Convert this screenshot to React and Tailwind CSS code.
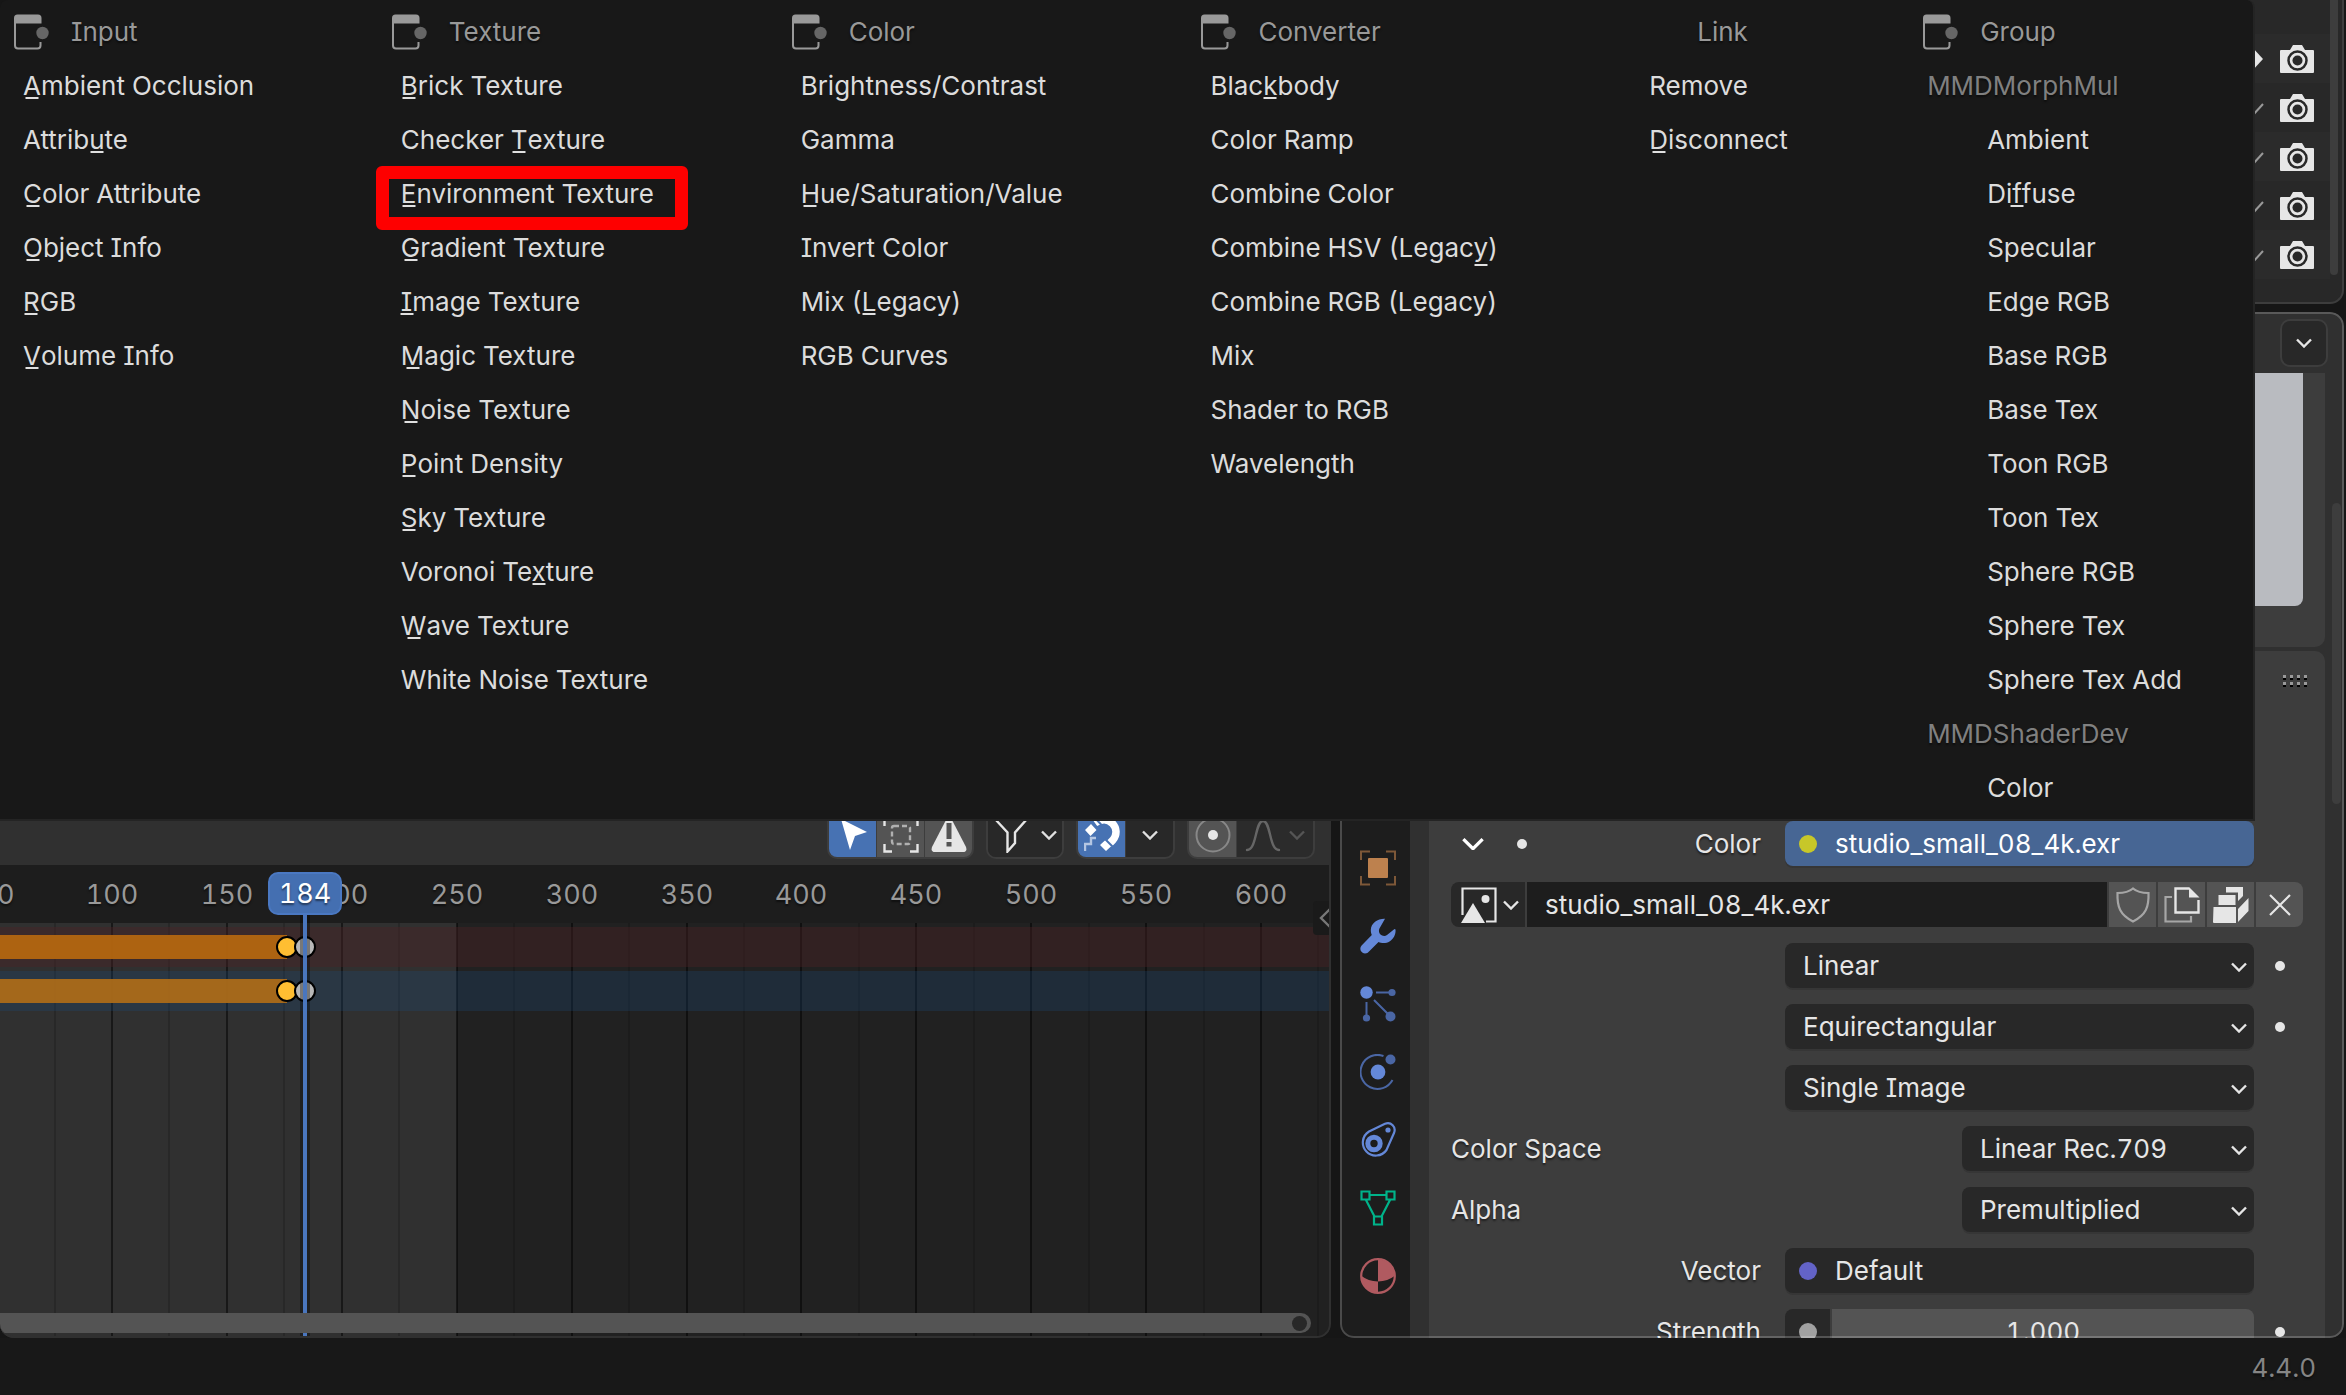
import React, { useState } from 'react';
import clsx from 'clsx';

// "_" marks the accelerator letter that follows it
const MENU = [
    {
        title: 'Input',
        icon: true,
        items: ['_Ambient Occlusion', 'Attrib_ute', '_Color Attribute', '_Object Info', '_RGB', '_Volume Info'],
    },
    {
        title: 'Texture',
        icon: true,
        items: [
            '_Brick Texture',
            'Checker _Texture',
            '_Environment Texture',
            '_Gradient Texture',
            '_Image Texture',
            '_Magic Texture',
            '_Noise Texture',
            '_Point Density',
            '_Sky Texture',
            'Voronoi Te_xture',
            '_Wave Texture',
            'White Noise Texture',
        ],
    },
    {
        title: 'Color',
        icon: true,
        items: ['Brightness/Contrast', 'Gamma', '_Hue/Saturation/Value', 'Invert Color', 'Mix (_Legacy)', 'RGB Curves'],
    },
    {
        title: 'Converter',
        icon: true,
        items: [
            'Blac_kbody',
            'Color Ramp',
            'Combine Color',
            'Combine HSV (Legac_y)',
            'Combine RGB (Legacy)',
            'Mix',
            'Shader to RGB',
            'Wavelength',
        ],
    },
    { title: 'Link', items: ['Remove', '_Disconnect'] },
];

const GROUPS = [
    {
        title: 'MMDMorphMul',
        items: [
            'Ambient',
            'Di_ffuse',
            'Specular',
            'Edge RGB',
            'Base RGB',
            'Base Tex',
            'Toon RGB',
            'Toon Tex',
            'Sphere RGB',
            'Sphere Tex',
            'Sphere Tex Add',
        ],
    },
    { title: 'MMDShaderDev', items: ['Color'] },
];

const HIGHLIGHTED = '_Environment Texture';

const NodeIcon = () => (
    <svg viewBox="0 0 36 36" className="w-9 h-9 shrink-0" fill="none">
        <path d="M1 9.5V4a3.500 3.500 0 0 1 3.500-3.500h20.500a3.500 3.500 0 0 1 3.500 3.500v5.500z" fill="#999" />
        <path d="M2 9v22.500a3 3 0 0 0 3 3h19.500a3 3 0 0 0 3-3V28" stroke="#999" strokeWidth="2" />
        <circle cx="29.500" cy="19" r="6.200" fill="#666" />
    </svg>
);

const Chevron = ({ className }) => (
    <svg viewBox="0 0 16 10" className={clsx('pointer-events-none shrink-0', className)} fill="none" stroke="currentColor" strokeWidth="2.400">
        <path d="M1 1.500l7 7 7-7" />
    </svg>
);

const Label = ({ text }) => {
    const at = text.indexOf('_');
    if (at < 0) return text;
    const letter = text[at + 1];
    return (
        <>
            {text.slice(0, at)}
            <span className="relative">
                {letter}
                <span
                    className={clsx(
                        'absolute left-1/2 -translate-x-1/2 w-[13px] h-[2px] bg-[#e0e0e0]',
                        'gjpqy'.includes(letter) ? '-bottom-[3px]' : 'bottom-[2px]'
                    )}
                />
            </span>
            {text.slice(at + 2)}
        </>
    );
};

const MenuItem = ({ text, indent }) => (
    <li className="relative h-[54px] flex">
        <button type="button" className={clsx('h-full w-full text-left whitespace-nowrap', indent ? 'pl-[78px]' : 'pl-[23px]')}>
            <Label text={text} />
        </button>
        {text === HIGHLIGHTED && (
            <span className="absolute -left-[2px] -top-px w-[312px] h-16 border-[13px] border-[#fe0000] rounded-md pointer-events-none" />
        )}
    </li>
);

const MenuHeader = ({ title, icon }) => (
    <h2 className="h-[54px] pl-[13px] flex items-center text-[#999]">
        {icon ? <NodeIcon /> : <span className="w-9" />}
        <span className="pl-[22px]">{title}</span>
    </h2>
);

const AddMenu = () => (
    <nav className="absolute left-0 top-0 w-[96.120%] z-20 bg-[#181818] border-r-2 border-b-2 border-[#242424] rounded-t-lg pt-[5px] pb-1 text-[#dcdcdc] grid grid-cols-[378fr_400fr_410fr_439fr_283fr_344fr]">
        {MENU.map(col => (
            <section key={col.title} className="min-w-0">
                <MenuHeader title={col.title} icon={col.icon} />
                <ul>
                    {col.items.map(text => <MenuItem key={text} text={text} />)}
                </ul>
            </section>
        ))}
        <section className="min-w-0">
            <MenuHeader title="Group" icon />
            {GROUPS.map(group => (
                <div key={group.title}>
                    <h3 className="h-[54px] pl-[18px] flex items-center text-[#808080]">{group.title}</h3>
                    <ul>
                        {group.items.map(text => <MenuItem key={text} text={text} indent />)}
                    </ul>
                </div>
            ))}
        </section>
    </nav>
);

/* ---------- timeline ---------- */

const FRAME_PX = 2.298;
const frameX = frame => Math.round(112 + (frame - 100) * FRAME_PX);
const MAJOR = [50, 100, 150, 200, 250, 300, 350, 400, 450, 500, 550, 600];
const MINOR = MAJOR.map(f => f + 25);
const KEYS = [
    { frame: 176, fill: 'bg-[#ffbe32]' },
    { frame: 184, fill: 'bg-[#b8b8b8]' },
];

const ToolButton = ({ label, active, className, children }) => (
    <button
        type="button"
        aria-label={label}
        className={clsx('h-full w-[47px] flex items-center justify-center', active ? 'bg-[#4772b3]' : 'bg-[#545454]', className)}
    >
        {children}
    </button>
);

const ToolGroup = ({ className, children }) => (
    <div className={clsx('h-12 flex gap-px border-2 border-[#3d3d3d] bg-[#3d3d3d] rounded-[10px] overflow-hidden', className)}>{children}</div>
);

const TimelineHeader = () => (
    <div className="h-[61px] bg-[#303030] pr-4 pt-[7px] flex justify-end items-start gap-3">
        <ToolGroup>
            <ToolButton label="Only show selected" active>
                <svg viewBox="0 0 36 36" className="w-9 h-9" fill="#fff"><path d="M6 2l26 13-12 4-5 14z" /></svg>
            </ToolButton>
            <ToolButton label="Show hidden">
                <svg viewBox="0 0 36 36" className="w-9 h-9" fill="none" strokeWidth="2.400">
                    <path d="M1.500 9V1.500H9M27 1.500h7.500V9M34.500 27v7.500H27M9 34.500H1.500V27" stroke="#e6e6e6" />
                    <rect x="9" y="9" width="18" height="18" rx="2" stroke="#b0b0b0" strokeDasharray="5 3" />
                </svg>
            </ToolButton>
            <ToolButton label="Only show errors">
                <svg viewBox="0 0 36 36" className="w-9 h-9">
                    <path d="M15 3q3-5 6 0l14 27q1.500 5-3 5H4q-4.500 0-3-5z" fill="#e6e6e6" />
                    <path d="M15.500 6h5v16h-5zM15.500 25h5v4.500h-5z" fill="#545454" />
                </svg>
            </ToolButton>
        </ToolGroup>
        <ToolGroup>
            <button type="button" aria-label="Filters" className="h-full w-[74px] bg-[#282828] flex items-center justify-center gap-3 text-[#e0e0e0]">
                <svg viewBox="0 0 36 36" className="w-9 h-9" fill="none" stroke="#e6e6e6" strokeWidth="2.400">
                    <path d="M2 2h32L22 15.500V26l-7.500 8.500v-19z" />
                </svg>
                <Chevron className="w-4" />
            </button>
        </ToolGroup>
        <ToolGroup>
            <ToolButton label="Snap" active>
                <svg viewBox="0 0 36 36" className="w-9 h-9" fill="none">
                    <path d="M11 6c14-10 27 6 18 17l-4 4" stroke="#fff" strokeWidth="7.500" />
                    <path d="M11 1L18 8.500" stroke="#4772b3" strokeWidth="2" />
                    <path d="M1 13l6-6 5.500 6-6 6zM16 28l6-5.500 6 6L22 34z" fill="#fff" />
                    <path d="M20 21l9 9" stroke="#4772b3" strokeWidth="2" />
                    <path d="M1 34v-7h6v-6h5" stroke="#b4c6e2" strokeWidth="2.400" />
                </svg>
            </ToolButton>
            <button type="button" aria-label="Snapping options" className="h-full w-[47px] bg-[#282828] flex items-center justify-center text-[#e0e0e0]">
                <Chevron className="w-4" />
            </button>
        </ToolGroup>
        <ToolGroup>
            <ToolButton label="Proportional editing">
                <svg viewBox="0 0 36 36" className="w-9 h-9" fill="none">
                    <circle cx="18" cy="18" r="16.500" stroke="#888" strokeWidth="2" />
                    <circle cx="18" cy="18" r="5" fill="#e6e6e6" />
                </svg>
            </ToolButton>
            <button type="button" aria-label="Falloff" className="h-full w-[76px] bg-[#2b2b2b] flex items-center justify-center gap-2 text-[#555]">
                <svg viewBox="0 0 36 36" className="w-9 h-9" fill="none" stroke="#666" strokeWidth="2.400" strokeLinecap="round">
                    <path d="M2 33c10 0 8-29 16-29s6 29 16 29" />
                </svg>
                <Chevron className="w-4" />
            </button>
        </ToolGroup>
    </div>
);

const Channel = ({ tint, bar }) => (
    <div className={clsx('relative h-10 flex items-center', tint)}>
        <div className={clsx('h-6 w-[287px]', bar)} />
        {KEYS.map(key => (
            <span
                key={key.frame}
                className={clsx('absolute w-[22px] h-[22px] -translate-x-1/2 rounded-full border-2 border-black', key.fill)}
                style={{ left: frameX(key.frame) }}
            />
        ))}
    </div>
);

const Timeline = () => (
    <section className="relative h-[534px] shrink-0 flex flex-col rounded-b-[14px] overflow-hidden bg-[#212121]">
        <TimelineHeader />
        <div className="relative flex-1 overflow-hidden">
            <div className="h-[58px] relative bg-[#1d1d1d] text-[27px] text-[#999]">
                {MAJOR.map(f => (
                    <span key={f} className="absolute top-[10px] -translate-x-1/2" style={{ left: frameX(f) }}>{f}</span>
                ))}
            </div>
            <div className="relative h-full">
                <div className="absolute inset-y-0 left-0 bg-[#303030]" style={{ width: frameX(250) }} />
                {MINOR.map(f => <span key={f} className="absolute inset-y-0 w-[2px] -translate-x-1/2 bg-black/15" style={{ left: frameX(f) }} />)}
                {MAJOR.map(f => <span key={f} className="absolute inset-y-0 w-[2px] -translate-x-1/2 bg-black/50" style={{ left: frameX(f) }} />)}
                <div className="relative pt-1 flex flex-col gap-1">
                    <Channel tint="bg-[#4e2425]/40" bar="bg-[#b36610]/95" />
                    <Channel tint="bg-[#1a4a7a]/27" bar="bg-[#ab6a19]/95" />
                </div>
            </div>
            {/* current frame */}
            <span className="absolute top-5 bottom-0 w-[10px] -translate-x-1/2 bg-black/35" style={{ left: frameX(184) }} />
            <span className="absolute top-2 bottom-0 w-1 -translate-x-1/2 bg-[#4a76bd]" style={{ left: frameX(184) }} />
            <span
                className="absolute top-[7px] w-[74px] h-[43px] -translate-x-1/2 rounded-[10px] border-2 border-[#4a78c2] bg-[#446fb1] text-white text-[27px] leading-[39px] text-center"
                style={{ left: frameX(184) }}
            >
                184
            </span>
            <button type="button" aria-label="Show sidebar" className="absolute right-0 top-9 w-[18px] h-[34px] rounded-l bg-[#1a1a1a] text-[#777] flex items-center justify-end">
                <svg viewBox="0 0 12 20" className="w-3 h-5" fill="none" stroke="currentColor" strokeWidth="2.400"><path d="M11 1L2 10l9 9" /></svg>
            </button>
            {/* horizontal scrollbar */}
            <div className="absolute left-0 right-5 bottom-[5px] h-5 rounded-r-full bg-[#545454] flex items-center justify-end pr-1">
                <span className="w-[15px] h-[15px] rounded-full bg-[#282828]" />
            </div>
        </div>
        <span className="absolute inset-0 border-r-2 border-b-2 border-[#303030] rounded-b-[14px] pointer-events-none" />
    </section>
);

/* ---------- outliner and properties ---------- */

const Outliner = () => (
    <section className="relative h-[304px] shrink-0 bg-[#282828] border-r-2 border-b-2 border-[#3d3d3d] rounded-b-[14px] overflow-hidden flex">
        <ul className="flex-1 pt-[34px]">
            {[0, 1, 2, 3, 4].map(i => (
                <li key={i} className={clsx('h-[49px] pr-4 flex items-center justify-end gap-4', i % 2 === 0 ? 'bg-[#2b2b2b]' : 'bg-[#282828]')}>
                    {i === 0 ? (
                        <svg viewBox="0 0 12 24" className="w-3 h-6" fill="#e6e6e6"><path d="M0 0l11 12L0 24z" /></svg>
                    ) : (
                        <svg viewBox="0 0 12 24" className="w-3 h-6" fill="none" stroke="#999" strokeWidth="2"><path d="M11 8L1 19" /></svg>
                    )}
                    <button type="button" aria-label="Disable in renders" className="w-[34px]">
                        <svg viewBox="0 0 34 28" className="w-[34px] h-7" fill="none">
                            <path d="M1 5h9l3-5h9l3 5h8q1 0 1 1v21q0 1-1 1H1q-1 0-1-1V6q0-1 1-1z" fill="#e6e6e6" />
                            <circle cx="17.500" cy="15.500" r="9" stroke="#282828" strokeWidth="2.500" />
                            <circle cx="17.500" cy="15.500" r="5" fill="#282828" />
                        </svg>
                    </button>
                </li>
            ))}
        </ul>
        <div className="w-3">
            <div className="w-2 h-[275px] rounded-b-full bg-[#3d3d3d]" />
        </div>
    </section>
);

const TABS = [
    {
        name: 'Object',
        art: (
            <>
                <path d="M1 10V1.500h9M26 1.500h9V10M35 26v8.500h-9M10 34.500H1V26" stroke="#7e5838" strokeWidth="2" />
                <rect x="8" y="8" width="20" height="20" rx="1" fill="#bd814e" />
            </>
        ),
    },
    {
        name: 'Modifiers',
        art: (
            <path
                d="M25 .800C18 .500 11 5 10.800 12c0 2 .300 3 1 5L1.600 27.500C-1 30.500.500 35 5 35.500c2 0 3-1 4-2L18.500 24c3 1.500 8 1.500 11-.500C34 21 36 16 35.500 11.500L34.500 11 27 17c-2 1.500-5 1-6.500-.500-2-2-2-5-.500-7z"
                fill="#6488d8"
            />
        ),
    },
    {
        name: 'Particles',
        art: (
            <>
                <path d="M16 6.500h14M6.500 16v14M14 14l14 14" stroke="#4a66a4" strokeWidth="2" />
                <circle cx="32" cy="6.500" r="3.600" fill="#4a66a4" />
                <circle cx="6.500" cy="32" r="3.600" fill="#4a66a4" />
                <circle cx="30.500" cy="30.500" r="5" fill="#4a66a4" />
                <circle cx="6.500" cy="6.500" r="6.200" fill="#6488d8" />
            </>
        ),
    },
    {
        name: 'Physics',
        art: (
            <>
                <path d="M23.500 2A17 17 0 1 0 32.500 26" stroke="#4a66a4" strokeWidth="2" />
                <circle cx="30.500" cy="5.500" r="5" fill="#4a66a4" />
                <circle cx="18" cy="18" r="7.400" fill="#6488d8" />
            </>
        ),
    },
    {
        name: 'Constraints',
        art: (
            <>
                <path d="M9 9.500L25 1.800C31-.500 36.500 5 34 11L26.500 28A13 13 0 1 1 9 9.500z" stroke="#6488d8" strokeWidth="2.200" />
                <circle cx="14" cy="21.500" r="6.200" stroke="#6488d8" strokeWidth="5" />
                <circle cx="28" cy="8" r="2.600" fill="#6488d8" />
            </>
        ),
    },
    {
        name: 'Data',
        art: (
            <path
                d="M1.500 1.500h8v8h-8zM26.500 1.500h8v8h-8zM14 26.500h8v8h-8zM10 5h16M6 10l8.500 16.500M30 10l-8.500 16.500"
                stroke="#00b38a"
                strokeWidth="2.200"
            />
        ),
    },
    {
        name: 'Material',
        art: (
            <>
                <circle cx="18" cy="18" r="16.800" stroke="#b05a60" strokeWidth="2.200" />
                <path d="M18 1.500A16.500 16.500 0 0 1 34.500 18Q28 23 18 23.500zM18 23.500V34.500A16.500 16.500 0 0 1 1.500 18Q8 23 18 23.500z" fill="#b05a60" />
            </>
        ),
    },
];

const PropertyTabs = () => (
    <div className="w-[70px] pl-[6px] shrink-0 bg-[#1d1d1d] flex flex-col justify-end pb-7">
        {TABS.map(tab => (
            <button key={tab.name} type="button" aria-label={tab.name} className="h-[68px] shrink-0 flex items-center justify-center">
                <svg viewBox="0 0 36 36" className="w-9 h-9" fill="none">{tab.art}</svg>
            </button>
        ))}
    </div>
);

const Dot = () => <span className="w-[10px] h-[10px] rounded-full bg-[#e6e6e6]" />;

const Row = ({ label, left, id, dot, narrow, children }) => (
    <div className="h-[45px] flex items-center">
        <div className={clsx('min-w-0 flex items-center', narrow ? 'flex-[487]' : 'flex-[310]')}>
            {left}
            {label && <label htmlFor={id} className={clsx(!narrow && 'ml-auto')}>{label}</label>}
        </div>
        <div className={clsx('min-w-0 h-full ml-6 flex', narrow ? 'flex-[292]' : 'flex-[469]')}>{children}</div>
        <div className="w-[49px] pl-[3px] flex justify-center">{dot && <Dot />}</div>
    </div>
);

const Select = ({ id, label, value }) => (
    <div className="relative w-full h-full">
        <select
            id={id}
            aria-label={label}
            className="appearance-none w-full h-full rounded-lg bg-[#282828] pl-[18px] outline-none shadow-[0_2px_0_#363636]"
            defaultValue={value}
        >
            <option>{value}</option>
        </select>
        <Chevron className="w-4 absolute right-[7px] top-[19px]" />
    </div>
);

const SocketField = ({ id, color, selected, children }) => (
    <button
        id={id}
        type="button"
        className={clsx('w-full h-full rounded-lg flex items-center gap-[18px] pl-[14px] shadow-[0_2px_0_#363636]', selected ? 'bg-[#476694] text-white' : 'bg-[#282828]')}
    >
        <span className={clsx('w-[18px] h-[18px] rounded-full', color)} />
        <span>{children}</span>
    </button>
);

const BlockButton = ({ label, className, children }) => (
    <button type="button" aria-label={label} className={clsx('w-[47px] h-full bg-[#545454] flex items-center justify-center', className)}>
        <svg viewBox="0 0 36 36" className="w-9 h-9" fill="none">{children}</svg>
    </button>
);

const ImageBlock = () => {
    const [name, setName] = useState('studio_small_08_4k.exr');

    return (
        <div className="h-[45px] flex gap-[2px] rounded-lg overflow-hidden">
            <button type="button" aria-label="Browse image" className="w-[74px] pl-1 bg-[#282828] flex items-center justify-center gap-[6px]">
                <svg viewBox="0 0 36 36" className="w-9 h-9" fill="none">
                    <path d="M1.500 28V1.500h33v33H25" stroke="#e6e6e6" strokeWidth="2.200" />
                    <path d="M12 16L24 36H0z" fill="#e6e6e6" />
                    <circle cx="24.500" cy="12" r="4" fill="#e6e6e6" />
                </svg>
                <Chevron className="w-4" />
            </button>
            <input
                aria-label="Image name"
                className="flex-1 min-w-0 bg-[#1d1d1d] pl-[18px] outline-none"
                value={name}
                onChange={e => setName(e.target.value)}
            />
            <BlockButton label="Fake user">
                <path d="M18 1.500c4 3.500 9 4.500 15.500 4.500C34 20 31 28 18 34.500 5 28 2 20 2.500 6 9 6 14 5 18 1.500z" stroke="#a6a6a6" strokeWidth="2.200" />
            </BlockButton>
            <BlockButton label="New image">
                <path d="M8 10H1.500v24.500H27V29" stroke="#a6a6a6" strokeWidth="2.200" />
                <path d="M25 1.500H11.500v24H34.500V13" stroke="#e6e6e6" strokeWidth="2.400" />
                <path d="M25 0L35.500 10.500H25z" fill="#e6e6e6" />
            </BlockButton>
            <BlockButton label="Open image">
                <path d="M13 0h17v9l-5 5V5.500H13zM5.500 8h17v10h-17zM.500 20H23v16H1q-1 0-1-1zM25 22L35.500 11v13L25 35z" fill="#e6e6e6" />
            </BlockButton>
            <BlockButton label="Unlink">
                <path d="M8 8l20 20M28 8L8 28" stroke="#e6e6e6" strokeWidth="2.200" />
            </BlockButton>
        </div>
    );
};

const Grip = () => (
    <span className="grid grid-cols-4 content-start gap-x-1 gap-y-[2px]">
        {Array.from({ length: 8 }, (_, i) => <span key={i} className="w-[3px] h-[5px] bg-[#999] border-b-2 border-black" />)}
    </span>
);

const SurfacePanel = () => (
    <div className="flex-1 bg-[#3d3d3d] rounded-t-[10px] px-[22px] text-[#e6e6e6]">
        <div className="h-[170px] flex justify-end pt-6 -mr-1">
            <Grip />
        </div>
        <div className="flex flex-col gap-4">
            <Row
                label="Color"
                id="color"
                left={
                    <button type="button" aria-label="Expand" className="pl-[11px] flex items-center gap-[33px] text-white">
                        <Chevron className="w-[22px]" />
                        <Dot />
                    </button>
                }
            >
                <SocketField id="color" color="bg-[#c7c729]" selected>studio_small_08_4k.exr</SocketField>
            </Row>
            <ImageBlock />
            <Row dot><Select label="Interpolation" value="Linear" /></Row>
            <Row dot><Select label="Projection" value="Equirectangular" /></Row>
            <Row><Select label="Source" value="Single Image" /></Row>
            <Row label="Color Space" id="colorspace" narrow><Select id="colorspace" value="Linear Rec.709" /></Row>
            <Row label="Alpha" id="alpha" narrow><Select id="alpha" value="Premultiplied" /></Row>
            <Row label="Vector" id="vector">
                <SocketField id="vector" color="bg-[#6363c7]">Default</SocketField>
            </Row>
            <Row label="Strength" id="strength" dot>
                <div className="w-full flex gap-[2px] rounded-lg overflow-hidden">
                    <span className="w-[45px] bg-[#282828] flex items-center justify-center">
                        <span className="w-[18px] h-[18px] rounded-full bg-[#a1a1a1]" />
                    </span>
                    <input id="strength" defaultValue="1.000" className="flex-1 min-w-0 bg-[#545454] text-center outline-none" />
                </div>
            </Row>
        </div>
    </div>
);

const Properties = () => (
    <section className="relative flex-1 min-h-0 mt-2 flex rounded-[14px] overflow-hidden bg-[#303030]">
        <PropertyTabs />
        <div className="flex-1 min-w-0 flex flex-col pl-[19px]">
            <div className="h-[61px] shrink-0 flex items-center justify-end pr-4">
                <button type="button" aria-label="Options" className="w-12 h-12 rounded-[10px] bg-[#282828] border-2 border-[#3d3d3d] flex items-center justify-center text-[#e6e6e6]">
                    <Chevron className="w-4" />
                </button>
            </div>
            <div className="flex-1 min-h-0 flex">
                <div className="flex-1 min-w-0 flex flex-col gap-1">
                    <div className="h-[274px] shrink-0 bg-[#3d3d3d] rounded-b-[10px] px-[22px]">
                        <div className="h-[233px] bg-[#b9bbc0] rounded-b-lg" />
                    </div>
                    <SurfacePanel />
                </div>
                <div className="w-[19px] shrink-0 pl-[7px] pt-[130px]">
                    <div className="w-[9px] h-[301px] rounded-full bg-[#3d3d3d]" />
                </div>
            </div>
        </div>
        <span className="absolute inset-0 border-2 border-white/20 rounded-[14px] pointer-events-none" />
    </section>
);

const App = () => (
    <div className="relative h-screen overflow-hidden flex flex-col bg-[#161616] font-['Inter',sans-serif] text-[26px] leading-10 text-[#e6e6e6] [font-feature-settings:'cv08','tnum'] [text-shadow:0_2px_2px_rgba(0,0,0,0.5)]">
        <AddMenu />
        <main className="flex-1 min-h-0 flex gap-[9px] pr-[2px]">
            <div className="flex-[1331] min-w-0 flex flex-col justify-end">
                <Timeline />
            </div>
            <div className="flex-[1004] min-w-0 flex flex-col">
                <Outliner />
                <Properties />
            </div>
        </main>
        <footer className="h-[57px] shrink-0 bg-[#181818] pr-[30px] pt-[2px] flex items-center justify-end text-[#858585]">4.4.0</footer>
    </div>
);

export default App;
